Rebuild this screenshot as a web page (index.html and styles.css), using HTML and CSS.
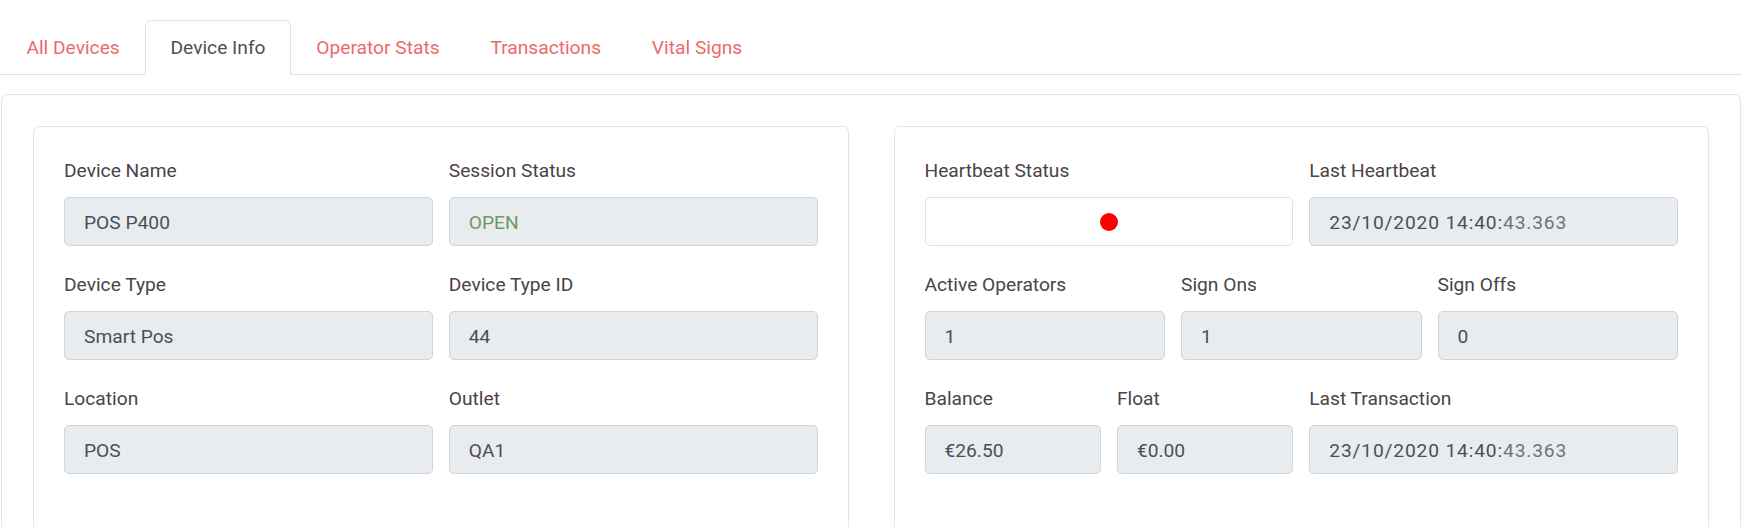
FILE: index.html
```html
<!DOCTYPE html>
<html lang="en">
<head>
<meta charset="utf-8">
<title>Device Info</title>
<link rel="stylesheet" href="styles.css">
</head>
<body>
<div class="page">
  <ul class="tabs">
    <li class="tab">All Devices</li>
    <li class="tab active">Device Info</li>
    <li class="tab">Operator Stats</li>
    <li class="tab">Transactions</li>
    <li class="tab">Vital Signs</li>
  </ul>
  <div class="panel">
    <div class="cols">
      <section class="card">
        <div class="form-grid">
          <div class="field span-6"><div class="label">Device Name</div><div class="value">POS P400</div></div>
          <div class="field span-6"><div class="label">Session Status</div><div class="value open">OPEN</div></div>
          <div class="field span-6"><div class="label">Device Type</div><div class="value">Smart Pos</div></div>
          <div class="field span-6"><div class="label">Device Type ID</div><div class="value">44</div></div>
          <div class="field span-6"><div class="label">Location</div><div class="value">POS</div></div>
          <div class="field span-6"><div class="label">Outlet</div><div class="value">QA1</div></div>
        </div>
      </section>
      <section class="card">
        <div class="form-grid">
          <div class="field span-6"><div class="label">Heartbeat Status</div><div class="value status"><span class="dot"></span></div></div>
          <div class="field span-6"><div class="label">Last Heartbeat</div><div class="value date">23/10/2020 14:40:<span class="sec">43.363</span></div></div>
          <div class="field span-4"><div class="label">Active Operators</div><div class="value">1</div></div>
          <div class="field span-4"><div class="label">Sign Ons</div><div class="value">1</div></div>
          <div class="field span-4"><div class="label">Sign Offs</div><div class="value">0</div></div>
          <div class="field span-3"><div class="label">Balance</div><div class="value">€26.50</div></div>
          <div class="field span-3"><div class="label">Float</div><div class="value">€0.00</div></div>
          <div class="field span-6"><div class="label">Last Transaction</div><div class="value date">23/10/2020 14:40:<span class="sec">43.363</span></div></div>
        </div>
      </section>
    </div>
  </div>
</div>
</body>
</html>
```

FILE: styles.css
```css
html, body {
  margin: 0;
  padding: 0;
  background: #ffffff;
}

body {
  font-family: Roboto, "Liberation Sans", Arial, sans-serif;
  font-size: 19.2px;
  line-height: 29px;
  color: #495057;
  overflow: hidden;
}

.page {
  padding-top: 20px;
}

.tabs {
  list-style: none;
  margin: 0;
  padding: 0 0 0 1px;
  display: flex;
  border-bottom: 1px solid #dee2e6;
}

.tab {
  padding: 12px 24.4px;
  border: 1px solid transparent;
  border-top-left-radius: 6px;
  border-top-right-radius: 6px;
  margin-bottom: -1px;
  color: #ec6a6a;
}

.tab.active {
  color: #495057;
  background: #ffffff;
  border-color: #dee2e6 #dee2e6 #ffffff;
}

.panel {
  margin: 19px 1px 0;
  border: 1px solid #e2e4e7;
  border-radius: 6px;
  padding: 31px 31px 0 31px;
}

.cols {
  display: grid;
  grid-template-columns: 1fr 1fr;
  column-gap: 45px;
}

.card {
  border: 1px solid #e2e4e7;
  border-radius: 6px;
  padding: 29px 30px 60px;
}

.form-grid {
  display: grid;
  grid-template-columns: repeat(12, 1fr);
  column-gap: 16px;
  row-gap: 24px;
}

.span-3 { grid-column: span 3; }
.span-4 { grid-column: span 4; }
.span-6 { grid-column: span 6; }

.label {
  color: #4b4347;
  margin-bottom: 12px;
}

.value {
  box-sizing: border-box;
  height: 49px;
  display: flex;
  align-items: center;
  padding: 1px 19px 0;
  background: #e9ecef;
  border: 1px solid #ced4da;
  border-radius: 5px;
  color: #495057;
  white-space: nowrap;
}

.value.open {
  color: #6a9b60;
}

.value.status {
  background: #ffffff;
  border-color: #dfe2e6;
  justify-content: center;
}

.dot {
  width: 18px;
  height: 18px;
  border-radius: 50%;
  background: #ff0000;
}

.value.date {
  letter-spacing: 0.85px;
}

.sec {
  color: #6c757d;
}
```
